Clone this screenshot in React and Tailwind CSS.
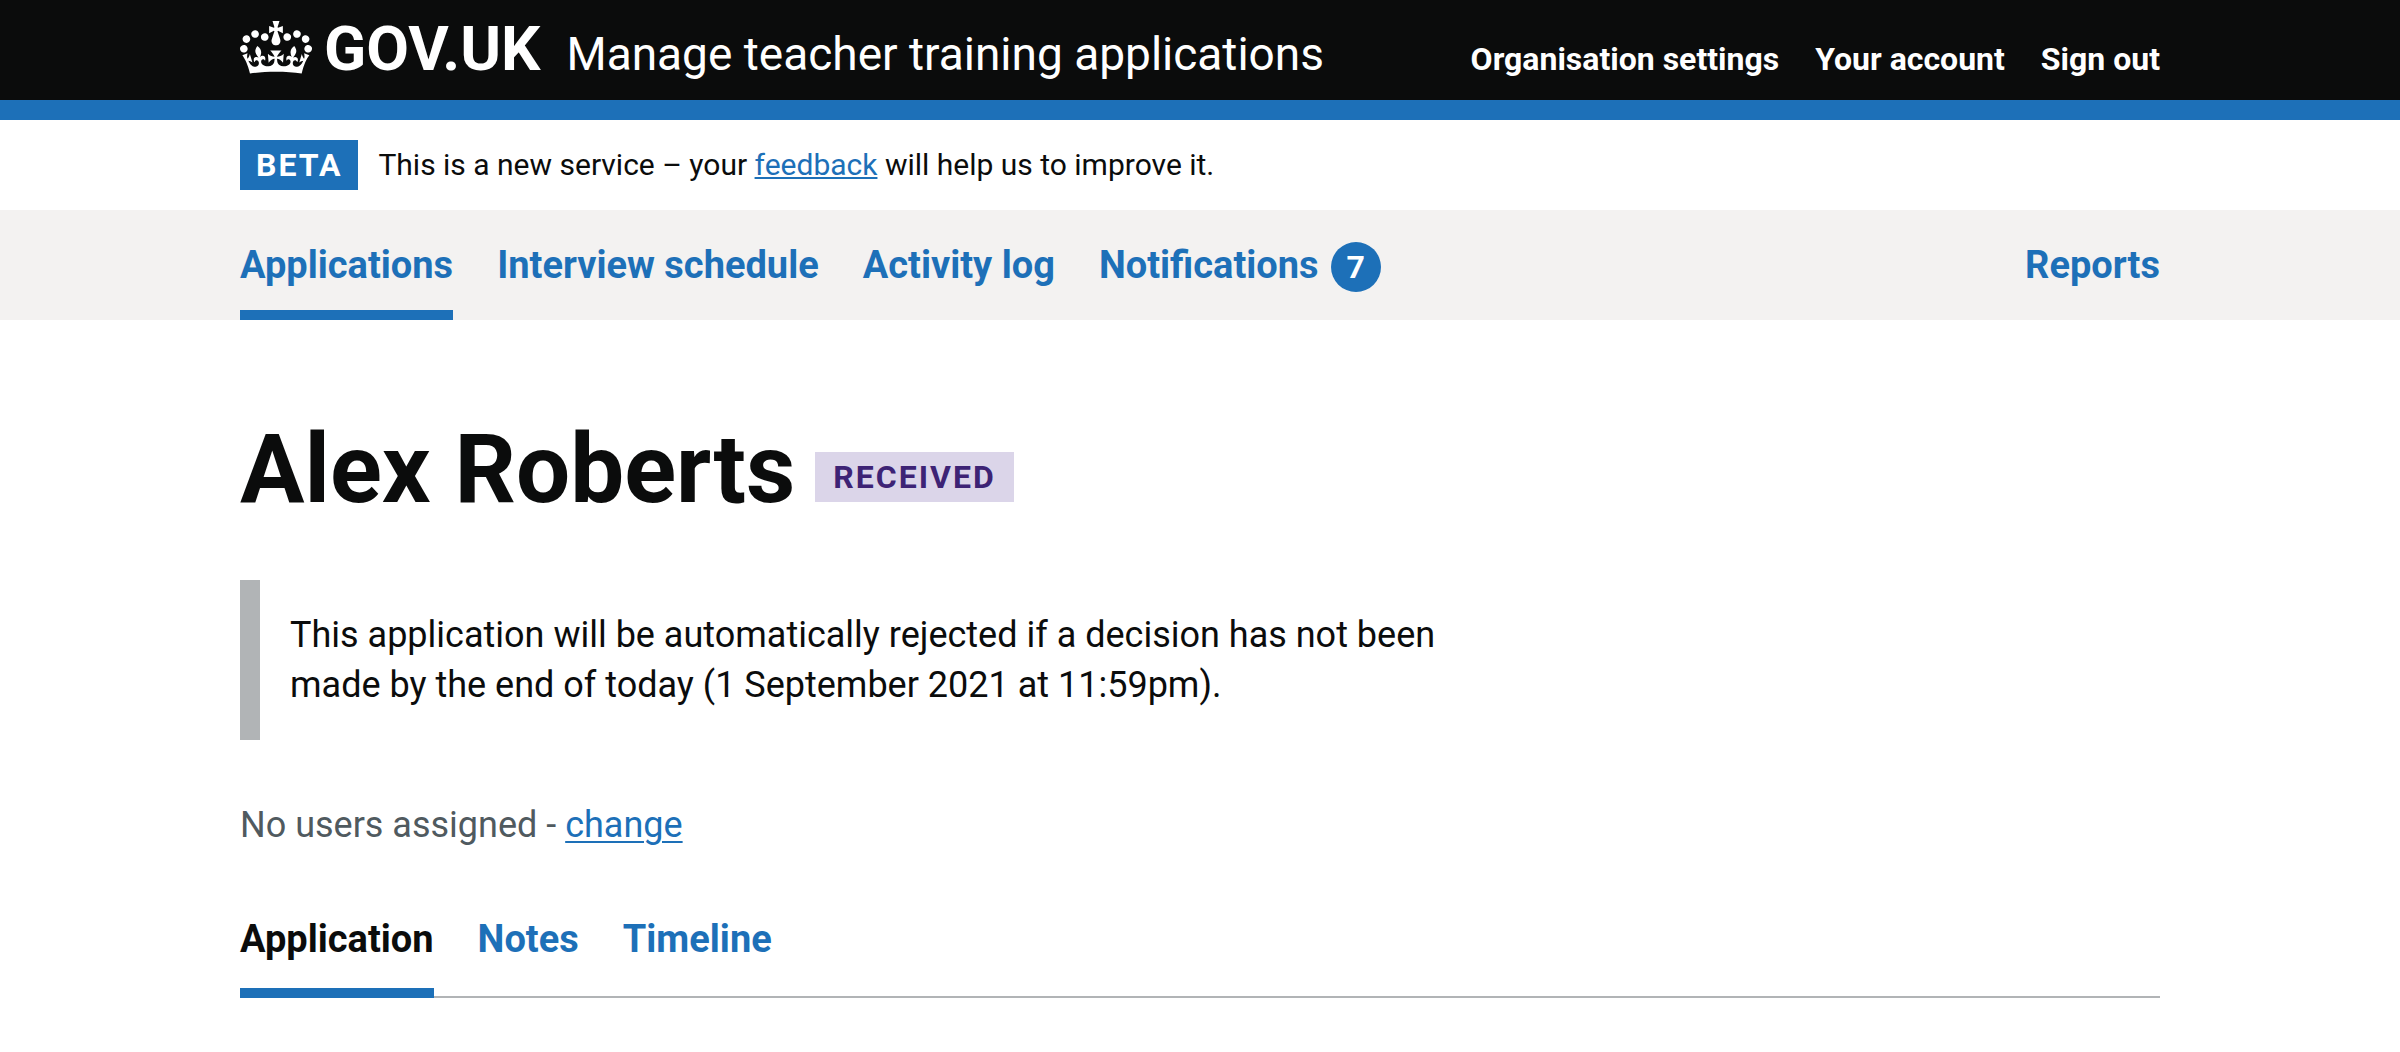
const container = "mx-auto w-4/5 max-w-[1920px]";

function Crown() {
  return (
    <svg
      aria-hidden="true"
      focusable="false"
      viewBox="0 0 132 97"
      className="mt-0.5 h-[53px] w-[72px] shrink-0 self-start"
    >
      <path
        fill="currentColor"
        fillRule="evenodd"
        d="M25 30.2c3.5 1.5 7.7-.2 9.1-3.7 1.5-3.6-.2-7.8-3.9-9.2-3.6-1.4-7.6.3-9.1 3.9-1.4 3.5.3 7.5 3.9 9zM9 39.5c3.6 1.5 7.8-.2 9.2-3.7 1.5-3.6-.2-7.8-3.9-9.1-3.6-1.5-7.6.2-9.1 3.8-1.4 3.5.3 7.5 3.8 9zM4.4 57.2c3.5 1.5 7.7-.2 9.1-3.8 1.5-3.6-.2-7.7-3.9-9.1-3.5-1.5-7.6.3-9.1 3.8-1.4 3.5.3 7.6 3.9 9.1zm38.3-21.4c3.5 1.5 7.7-.2 9.1-3.8 1.5-3.6-.2-7.7-3.9-9.1-3.6-1.5-7.6.3-9.1 3.8-1.3 3.6.4 7.7 3.9 9.1zm64.4-5.6c-3.6 1.5-7.8-.2-9.1-3.7-1.5-3.6.2-7.8 3.8-9.2 3.6-1.4 7.7.3 9.2 3.9 1.3 3.5-.4 7.5-3.9 9zm15.9 9.3c-3.6 1.5-7.7-.2-9.1-3.7-1.5-3.6.2-7.8 3.7-9.1 3.6-1.5 7.7.2 9.2 3.8 1.5 3.5-.3 7.5-3.8 9zm4.7 17.7c-3.6 1.5-7.8-.2-9.2-3.8-1.5-3.6.2-7.7 3.9-9.1 3.6-1.5 7.7.3 9.2 3.8 1.3 3.5-.4 7.6-3.9 9.1zM89.3 35.8c-3.6 1.5-7.8-.2-9.2-3.8-1.4-3.6.2-7.7 3.9-9.1 3.6-1.5 7.7.3 9.2 3.8 1.4 3.6-.3 7.7-3.9 9.1zM69.7 17.7l8.9 4.7V9.3l-8.9 2.8c-.2-.3-.5-.6-.9-.9L72.4 0H59.6l3.5 11.2c-.3.3-.6.5-.9.9l-8.8-2.8v13.1l8.8-4.7c.3.3.6.7.9.9l-5 15.4v.1c-.2.8-.4 1.6-.4 2.4 0 4.1 3.1 7.5 7 8.1h.2c.3 0 .7.1 1 .1.4 0 .7 0 1-.1h.2c4-.6 7.1-4.1 7.1-8.1 0-.8-.1-1.7-.4-2.4V34l-5.1-15.4c.4-.2.7-.6 1-.9zM66 92.8c16.9 0 32.8 1.1 47.1 3.2 4-16.9 8.9-26.7 14-33.5l-9.6-3.4c1 4.9 1.1 7.2 0 10.2-1.5-1.4-3-4.3-4.2-8.7L108.6 76c2.8-2 5-3.2 7.5-3.3-4.4 9.4-10 11.9-13.6 11.2-4.3-.8-6.3-4.6-5.6-7.9 1-4.7 5.7-5.9 8-.5 4.3-8.7-3-11.4-7.6-8.8 7.1-7.2 7.9-13.5 2.1-21.1-8 6.1-8.1 12.3-4.5 20.8-4.7-5.4-12.1-2.5-9.5 6.2 3.4-5.2 7.9-2 7.2 3.1-.6 4.3-6.4 7.8-13.5 7.2-10.3-.9-10.9-8-11.2-13.8 2.5-.5 7.1 1.8 11 7.3L80.2 60c-4.1 4.4-8 5.3-12.3 5.4 1.4-4.4 8-11.6 8-11.6H55.5s6.4 7.2 7.9 11.6c-4.2-.1-8-1-12.3-5.4l1.4 16.4c3.9-5.5 8.5-7.7 10.9-7.3-.3 5.8-.9 12.8-11.1 13.8-7.2.6-12.9-2.9-13.5-7.2-.7-5 3.8-8.3 7.1-3.1 2.7-8.7-4.6-11.6-9.4-6.2 3.7-8.5 3.6-14.7-4.6-20.8-5.8 7.6-5 13.9 2.2 21.1-4.7-2.6-11.9.1-7.7 8.8 2.3-5.5 7.1-4.2 8.1.5.7 3.3-1.3 7.1-5.7 7.9-3.5.7-9-1.8-13.5-11.2 2.5.1 4.7 1.3 7.5 3.3l-4.7-15.4c-1.2 4.4-2.7 7.2-4.3 8.7-1.1-3-.9-5.3 0-10.2l-9.5 3.4c5 6.9 9.9 16.7 14 33.5 14.8-2.1 30.8-3.2 47.7-3.2z"
      />
    </svg>
  );
}

function Header() {
  return (
    <header className="border-b-[20px] border-[#1d70b8] bg-[#0b0c0c] text-white">
      <div className={`${container} flex items-baseline justify-between pt-[19px] pb-4`}>
        <div className="flex items-baseline">
          <a href="#home" className="flex items-baseline gap-3 text-[62px] leading-[60px] font-bold">
            <Crown />
            GOV.UK
          </a>
          <a href="#service" className="ml-[26px] text-[46px] leading-[60px]">
            Manage teacher training applications
          </a>
        </div>
        <nav aria-label="Account">
          <ul className="flex gap-9 text-[32px] leading-[50px] font-bold">
            <li><a href="#organisation">Organisation settings</a></li>
            <li><a href="#account">Your account</a></li>
            <li><a href="#sign-out">Sign out</a></li>
          </ul>
        </nav>
      </div>
    </header>
  );
}

function PhaseBanner() {
  return (
    <div className={`${container} flex items-center gap-5 py-5`}>
      <strong className="bg-[#1d70b8] px-4 text-[32px] leading-[50px] tracking-[2px] text-white uppercase">
        Beta
      </strong>
      <p className="text-[30px] leading-[50px]">
        This is a new service – your{" "}
        <a href="#feedback" className="text-[#1d70b8] underline decoration-2 underline-offset-2">feedback</a>{" "}
        will help us to improve it.
      </p>
    </div>
  );
}

function NavLink({ href, active, children }) {
  return (
    <li className="flex">
      <a
        href={href}
        aria-current={active ? "page" : undefined}
        className={`border-b-[10px] pt-[30px] pb-[18px] ${active ? "border-[#1d70b8]" : "border-transparent"}`}
      >
        {children}
      </a>
    </li>
  );
}

function PrimaryNav() {
  return (
    <nav aria-label="Primary" className="bg-[#f3f2f1]">
      <div className={`${container} flex justify-between text-[38px] leading-[50px] font-bold text-[#1d70b8]`}>
        <ul className="flex gap-11">
          <NavLink href="#applications" active>Applications</NavLink>
          <NavLink href="#interviews">Interview schedule</NavLink>
          <NavLink href="#activity">Activity log</NavLink>
          <NavLink href="#notifications">
            Notifications
            <span className="ml-3 inline-block w-[50px] rounded-full bg-[#1d70b8] text-center text-[32px] leading-[50px] text-white">
              7
            </span>
          </NavLink>
        </ul>
        <ul className="flex">
          <NavLink href="#reports">Reports</NavLink>
        </ul>
      </div>
    </nav>
  );
}

function Tab({ href, active, children }) {
  return (
    <li>
      <a
        href={href}
        aria-current={active ? "page" : undefined}
        className={`block border-b-[10px] pb-6 ${
          active ? "border-[#1d70b8] text-[#0b0c0c]" : "border-transparent text-[#1d70b8]"
        }`}
      >
        {children}
      </a>
    </li>
  );
}

export default function App() {
  return (
    <div className="bg-white font-[Roboto,Arial,sans-serif] text-[#0b0c0c]">
      <Header />
      <PhaseBanner />
      <PrimaryNav />
      <main className={`${container} pt-[100px]`}>
        <div className="flex items-end gap-5">
          <h1 className="text-[96px] leading-[98px] font-bold">Alex Roberts</h1>
          <strong className="mb-4 bg-[#dbd5e9] px-[18px] text-[32px] leading-[50px] tracking-[2px] text-[#3d2375] uppercase">
            Received
          </strong>
        </div>
        <div className="mt-[62px] w-2/3 pr-[30px]">
          <p className="border-l-[20px] border-[#b1b4b6] p-[30px] text-[36px] leading-[50px]">
            This application will be automatically rejected if a decision has not been made by the end of
            today (1 September 2021 at 11:59pm).
          </p>
        </div>
        <p className="mt-[60px] text-[36px] leading-[50px] text-[#505a5f]">
          No users assigned -{" "}
          <a href="#change" className="text-[#1d70b8] underline decoration-2 underline-offset-4">change</a>
        </p>
        <nav aria-label="Application sections" className="mt-16">
          <ul className="flex gap-11 text-[38px] leading-[50px] font-bold shadow-[inset_0_-2px_0_#b1b4b6]">
            <Tab href="#application" active>Application</Tab>
            <Tab href="#notes">Notes</Tab>
            <Tab href="#timeline">Timeline</Tab>
          </ul>
        </nav>
      </main>
    </div>
  );
}
